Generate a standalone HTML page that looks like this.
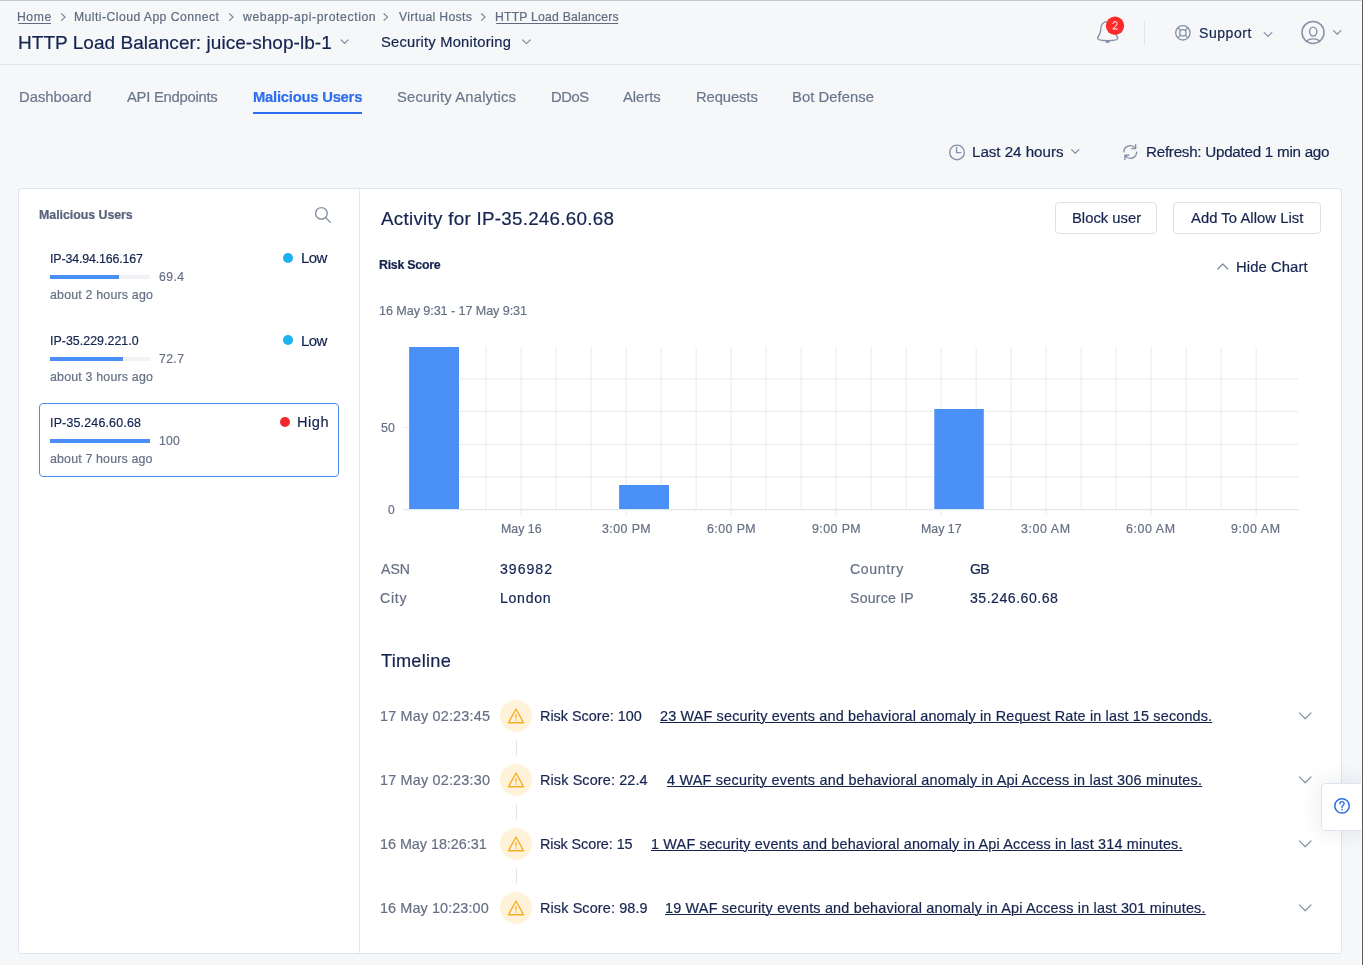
<!DOCTYPE html>
<html><head><meta charset="utf-8">
<style>
html,body{margin:0;padding:0;}
body{-webkit-font-smoothing:antialiased;width:1363px;height:965px;overflow:hidden;background:#f5f7f9;position:relative;font-family:"Liberation Sans",sans-serif;}
.t{will-change:transform;-webkit-text-stroke:0.2px currentColor;position:absolute;white-space:nowrap;line-height:1;font-family:"Liberation Sans",sans-serif;}
.a{position:absolute;}
svg.a{overflow:visible;}
</style></head><body>
<!-- top edge -->
<div class="a" style="left:0;top:0;width:1363px;height:1px;background:#c6c7c9"></div>
<!-- right dark edge -->
<div class="a" style="left:1362px;top:0;width:1px;height:965px;background:#6e6e6e"></div>
<!-- header bottom border -->
<div class="a" style="left:0;top:64px;width:1361px;height:1px;background:#dde2ea"></div>
<!-- active tab underline -->
<div class="a" style="left:253px;top:112px;width:109px;height:2px;background:#2d6df2"></div>
<!-- card -->
<div class="a" style="left:18px;top:188px;width:1322px;height:764px;background:#fff;border:1px solid #dfe4ee;border-radius:4px"></div>
<div class="a" style="left:359px;top:189px;width:1px;height:764px;background:#e3e7ef"></div>
<!-- selected item -->
<div class="a" style="left:39px;top:403px;width:298px;height:72px;border:1px solid #4f8bf0;border-radius:4px"></div>
<!-- progress bars -->
<div class="a" style="left:50px;top:275px;width:100px;height:4px;background:#f1f3f6"></div>
<div class="a" style="left:50px;top:275px;width:69px;height:4px;background:#4a8ff5"></div>
<div class="a" style="left:50px;top:357px;width:100px;height:4px;background:#f1f3f6"></div>
<div class="a" style="left:50px;top:357px;width:73px;height:4px;background:#4a8ff5"></div>
<div class="a" style="left:50px;top:439px;width:100px;height:4px;background:#4a8ff5"></div>
<!-- dots -->
<div class="a" style="left:283px;top:253px;width:10px;height:10px;border-radius:50%;background:#1eb1f0"></div>
<div class="a" style="left:283px;top:335px;width:10px;height:10px;border-radius:50%;background:#1eb1f0"></div>
<div class="a" style="left:280px;top:417px;width:10px;height:10px;border-radius:50%;background:#f0282d"></div>
<!-- buttons -->
<div class="a" style="left:1055px;top:202px;width:100px;height:30px;border:1px solid #dce1eb;border-radius:4px;background:#fff"></div>
<div class="a" style="left:1173px;top:202px;width:146px;height:30px;border:1px solid #dce1eb;border-radius:4px;background:#fff"></div>
<!-- help widget -->
<div class="a" style="left:1321px;top:783px;width:46px;height:46px;border:1px solid #dde3ef;border-radius:4px;background:#fff;box-shadow:0 0 24px rgba(30,40,70,0.10)"></div>
<svg class="a" style="left:0;top:0" width="1363" height="965" viewBox="0 0 1363 965"><path d="M61.5 13.8 L65.1 17.1 L61.5 20.4" fill="none" stroke="#7b8699" stroke-width="1.2" stroke-linecap="round" stroke-linejoin="round"/>
<path d="M229.5 13.8 L233.1 17.1 L229.5 20.4" fill="none" stroke="#7b8699" stroke-width="1.2" stroke-linecap="round" stroke-linejoin="round"/>
<path d="M384.0 13.8 L387.6 17.1 L384.0 20.4" fill="none" stroke="#7b8699" stroke-width="1.2" stroke-linecap="round" stroke-linejoin="round"/>
<path d="M481.5 13.8 L485.1 17.1 L481.5 20.4" fill="none" stroke="#7b8699" stroke-width="1.2" stroke-linecap="round" stroke-linejoin="round"/>
<path d="M341.2 40 L344.6 43.4 L348 40" fill="none" stroke="#8592a6" stroke-width="1.3" stroke-linecap="round" stroke-linejoin="round"/>
<path d="M522.6 40 L526.4 43.6 L530.2 40" fill="none" stroke="#8592a6" stroke-width="1.3" stroke-linecap="round" stroke-linejoin="round"/>
<path d="M1107.6 21.6 C1102.6 21.6 1100.6 25.6 1100.6 30.6 C1100.6 35.2 1097.6 35.8 1097.6 38.2 C1097.6 40.2 1102.6 40.6 1107.6 40.6 C1112.6 40.6 1117.8 40.2 1117.8 38.2 C1117.8 35.8 1114.6 35.2 1114.6 30.6 C1114.6 25.6 1112.6 21.6 1107.6 21.6 Z" fill="none" stroke="#8592a6" stroke-width="1.4"/>
<path d="M1105.4 40.9 A2.2 2.2 0 0 0 1109.8 40.9 Z" fill="#8592a6"/>
<circle cx="1115" cy="25.8" r="9.2" fill="#ff2b2b"/>
<path d="M1112.9 23.6 Q1113.2 21.6 1115.1 21.6 Q1117.1 21.6 1117.1 23.5 Q1117.1 24.8 1115.6 26.2 L1112.8 29 L1117.3 29" fill="none" stroke="#fff" stroke-width="1" stroke-linecap="round" stroke-linejoin="round"/>
<rect x="1144" y="21" width="1" height="24" fill="#dfe3ea"/>
<circle cx="1182.9" cy="32.8" r="7.2" fill="none" stroke="#8592a6" stroke-width="1.3"/>
<circle cx="1182.9" cy="32.8" r="3.2" fill="none" stroke="#8592a6" stroke-width="1.3"/>
<line x1="1185.16" y1="35.06" x2="1187.99" y2="37.89" stroke="#8592a6" stroke-width="1.3"/>
<line x1="1180.64" y1="35.06" x2="1177.81" y2="37.89" stroke="#8592a6" stroke-width="1.3"/>
<line x1="1180.64" y1="30.54" x2="1177.81" y2="27.71" stroke="#8592a6" stroke-width="1.3"/>
<line x1="1185.16" y1="30.54" x2="1187.99" y2="27.71" stroke="#8592a6" stroke-width="1.3"/>
<path d="M1264.2 32.6 L1268 36.4 L1271.8 32.6" fill="none" stroke="#8592a6" stroke-width="1.3" stroke-linecap="round" stroke-linejoin="round"/>
<circle cx="1313" cy="32.4" r="11" fill="none" stroke="#8592a6" stroke-width="1.5"/>
<ellipse cx="1313.2" cy="31.6" rx="3.6" ry="4.5" fill="none" stroke="#8592a6" stroke-width="1.4"/>
<path d="M1306 41.2 Q1313.2 36.6 1320.4 41.2" fill="none" stroke="#8592a6" stroke-width="1.4"/>
<path d="M1333.6 30.6 L1337.2 34.2 L1340.8 30.6" fill="none" stroke="#8592a6" stroke-width="1.3" stroke-linecap="round" stroke-linejoin="round"/>
<circle cx="957" cy="152.4" r="7.3" fill="none" stroke="#8592a6" stroke-width="1.4"/>
<path d="M956.6 147.4 V152.6 H960.8" fill="none" stroke="#8592a6" stroke-width="1.4" stroke-linecap="round" stroke-linejoin="round"/>
<path d="M1071.6 149.6 L1075.2 153.2 L1078.8 149.6" fill="none" stroke="#8592a6" stroke-width="1.3" stroke-linecap="round" stroke-linejoin="round"/>
<path d="M1123.9 151.7 A6.3 6.3 0 0 1 1135.2 148.2 M1135.6 144.4 V148.6 H1131.6 M1136.7 152.3 A6.3 6.3 0 0 1 1125.4 155.8 M1124.9 159.6 V155.3 H1128.9" fill="none" stroke="#8592a6" stroke-width="1.4" stroke-linecap="round" stroke-linejoin="round"/>
<circle cx="321.4" cy="213.4" r="5.8" fill="none" stroke="#8592a6" stroke-width="1.4"/>
<path d="M325.6 217.6 L330.2 222.2" fill="none" stroke="#8592a6" stroke-width="1.4" stroke-linecap="round"/>
<path d="M1217.8 269 L1222.8 264 L1227.8 269" fill="none" stroke="#8592a6" stroke-width="1.4" stroke-linecap="round" stroke-linejoin="round"/>
<rect x="415.6" y="347" width="1" height="162.5" fill="#e8eaf0"/>
<rect x="450.6" y="347" width="1" height="162.5" fill="#e8eaf0"/>
<rect x="485.6" y="347" width="1" height="162.5" fill="#e8eaf0"/>
<rect x="520.6" y="347" width="1" height="162.5" fill="#e8eaf0"/>
<rect x="555.6" y="347" width="1" height="162.5" fill="#e8eaf0"/>
<rect x="590.6" y="347" width="1" height="162.5" fill="#e8eaf0"/>
<rect x="625.6" y="347" width="1" height="162.5" fill="#e8eaf0"/>
<rect x="660.6" y="347" width="1" height="162.5" fill="#e8eaf0"/>
<rect x="695.6" y="347" width="1" height="162.5" fill="#e8eaf0"/>
<rect x="730.6" y="347" width="1" height="162.5" fill="#e8eaf0"/>
<rect x="765.6" y="347" width="1" height="162.5" fill="#e8eaf0"/>
<rect x="800.6" y="347" width="1" height="162.5" fill="#e8eaf0"/>
<rect x="835.6" y="347" width="1" height="162.5" fill="#e8eaf0"/>
<rect x="870.6" y="347" width="1" height="162.5" fill="#e8eaf0"/>
<rect x="905.6" y="347" width="1" height="162.5" fill="#e8eaf0"/>
<rect x="940.6" y="347" width="1" height="162.5" fill="#e8eaf0"/>
<rect x="975.6" y="347" width="1" height="162.5" fill="#e8eaf0"/>
<rect x="1010.6" y="347" width="1" height="162.5" fill="#e8eaf0"/>
<rect x="1045.6" y="347" width="1" height="162.5" fill="#e8eaf0"/>
<rect x="1080.6" y="347" width="1" height="162.5" fill="#e8eaf0"/>
<rect x="1115.6" y="347" width="1" height="162.5" fill="#e8eaf0"/>
<rect x="1150.6" y="347" width="1" height="162.5" fill="#e8eaf0"/>
<rect x="1185.6" y="347" width="1" height="162.5" fill="#e8eaf0"/>
<rect x="1220.6" y="347" width="1" height="162.5" fill="#e8eaf0"/>
<rect x="1255.6" y="347" width="1" height="162.5" fill="#e8eaf0"/>
<rect x="409" y="378.4" width="889.5" height="1" fill="#e8eaf0"/>
<rect x="409" y="410.8" width="889.5" height="1" fill="#e8eaf0"/>
<rect x="409" y="443.9" width="889.5" height="1" fill="#e8eaf0"/>
<rect x="409" y="476.4" width="889.5" height="1" fill="#e8eaf0"/>
<rect x="403" y="508.9" width="895.5" height="1.4" fill="#e3e6ed"/>
<rect x="403" y="427" width="6" height="1" fill="#e8eaf0"/>
<rect x="520.6" y="510" width="1" height="5.5" fill="#e8eaf0"/>
<rect x="625.6" y="510" width="1" height="5.5" fill="#e8eaf0"/>
<rect x="730.6" y="510" width="1" height="5.5" fill="#e8eaf0"/>
<rect x="835.6" y="510" width="1" height="5.5" fill="#e8eaf0"/>
<rect x="940.6" y="510" width="1" height="5.5" fill="#e8eaf0"/>
<rect x="1045.6" y="510" width="1" height="5.5" fill="#e8eaf0"/>
<rect x="1150.6" y="510" width="1" height="5.5" fill="#e8eaf0"/>
<rect x="1255.6" y="510" width="1" height="5.5" fill="#e8eaf0"/>
<rect x="409.1" y="347" width="49.9" height="162" fill="#4b90f6"/>
<rect x="619.1" y="485" width="49.9" height="24" fill="#4b90f6"/>
<rect x="934.3" y="409" width="49.5" height="100" fill="#4b90f6"/>
<circle cx="516" cy="715.9" r="16" fill="#fef2d8"/>
<path d="M516 709.0 L523.6 722.8 L508.4 722.8 Z" fill="none" stroke="#fbad26" stroke-width="1.4" stroke-linejoin="round"/>
<rect x="515.35" y="714.3" width="1.3" height="3.9" fill="#fbad26"/>
<rect x="515.35" y="719.4" width="1.3" height="1.3" fill="#fbad26"/>
<rect x="516" y="739.9" width="1" height="15.5" fill="#e1e5ee"/>
<path d="M1299.4 712.9 L1305.2 718.6999999999999 L1311 712.9" fill="none" stroke="#8592a6" stroke-width="1.3" stroke-linecap="round" stroke-linejoin="round"/>
<circle cx="516" cy="779.9" r="16" fill="#fef2d8"/>
<path d="M516 773.0 L523.6 786.8 L508.4 786.8 Z" fill="none" stroke="#fbad26" stroke-width="1.4" stroke-linejoin="round"/>
<rect x="515.35" y="778.3" width="1.3" height="3.9" fill="#fbad26"/>
<rect x="515.35" y="783.4" width="1.3" height="1.3" fill="#fbad26"/>
<rect x="516" y="803.9" width="1" height="15.5" fill="#e1e5ee"/>
<path d="M1299.4 776.9 L1305.2 782.6999999999999 L1311 776.9" fill="none" stroke="#8592a6" stroke-width="1.3" stroke-linecap="round" stroke-linejoin="round"/>
<circle cx="516" cy="843.9" r="16" fill="#fef2d8"/>
<path d="M516 837.0 L523.6 850.8 L508.4 850.8 Z" fill="none" stroke="#fbad26" stroke-width="1.4" stroke-linejoin="round"/>
<rect x="515.35" y="842.3" width="1.3" height="3.9" fill="#fbad26"/>
<rect x="515.35" y="847.4" width="1.3" height="1.3" fill="#fbad26"/>
<rect x="516" y="867.9" width="1" height="15.5" fill="#e1e5ee"/>
<path d="M1299.4 840.9 L1305.2 846.6999999999999 L1311 840.9" fill="none" stroke="#8592a6" stroke-width="1.3" stroke-linecap="round" stroke-linejoin="round"/>
<circle cx="516" cy="907.9" r="16" fill="#fef2d8"/>
<path d="M516 901.0 L523.6 914.8 L508.4 914.8 Z" fill="none" stroke="#fbad26" stroke-width="1.4" stroke-linejoin="round"/>
<rect x="515.35" y="906.3" width="1.3" height="3.9" fill="#fbad26"/>
<rect x="515.35" y="911.4" width="1.3" height="1.3" fill="#fbad26"/>
<path d="M1299.4 904.9 L1305.2 910.6999999999999 L1311 904.9" fill="none" stroke="#8592a6" stroke-width="1.3" stroke-linecap="round" stroke-linejoin="round"/>
<circle cx="1342" cy="805.9" r="7.2" fill="none" stroke="#2f6fe4" stroke-width="1.5"/>
<path d="M1339.9 803.9 Q1339.9 801.6 1342 801.6 Q1344.1 801.6 1344.1 803.6 Q1344.1 805 1342.8 805.7 Q1342 806.2 1342 807.6" fill="none" stroke="#2f6fe4" stroke-width="1.4" stroke-linecap="round"/>
<circle cx="1342" cy="809.6" r="0.85" fill="#2f6fe4"/>
<rect x="18.3" y="23" width="32.7" height="1" fill="#5f6b80"/>
<rect x="496.2" y="23" width="122" height="1" fill="#5f6b80"/></svg>
<span class='t' style='left:17.30px;top:11.00px;font-size:12.2px;letter-spacing:0.567px;color:#5f6b80;font-weight:400;'>Home</span>
<span class='t' style='left:74.20px;top:11.00px;font-size:12.2px;letter-spacing:0.455px;color:#5f6b80;font-weight:400;'>Multi-Cloud App Connect</span>
<span class='t' style='left:243.20px;top:11.00px;font-size:12.2px;letter-spacing:0.600px;color:#5f6b80;font-weight:400;'>webapp-api-protection</span>
<span class='t' style='left:399.20px;top:11.00px;font-size:12.2px;letter-spacing:0.333px;color:#5f6b80;font-weight:400;'>Virtual Hosts</span>
<span class='t' style='left:495.20px;top:11.00px;font-size:12.2px;letter-spacing:0.222px;color:#5f6b80;font-weight:400;'>HTTP Load Balancers</span>
<span class='t' style='left:18.00px;top:33.00px;font-size:19px;letter-spacing:0.044px;color:#14244f;font-weight:400;'>HTTP Load Balancer: juice-shop-lb-1</span>
<span class='t' style='left:380.60px;top:35.00px;font-size:14.7px;letter-spacing:0.233px;color:#14244f;font-weight:400;'>Security Monitoring</span>
<span class='t' style='left:1199.10px;top:26.00px;font-size:14px;letter-spacing:0.567px;color:#14244f;font-weight:400;'>Support</span>
<span class='t' style='left:18.80px;top:90.00px;font-size:14.8px;letter-spacing:0.012px;color:#6b778c;font-weight:400;'>Dashboard</span>
<span class='t' style='left:127.30px;top:90.00px;font-size:14.8px;letter-spacing:-0.258px;color:#6b778c;font-weight:400;'>API Endpoints</span>
<span class='t' style='left:252.50px;top:90.00px;font-size:14.8px;letter-spacing:-0.236px;color:#2e6ef0;font-weight:700;'>Malicious Users</span>
<span class='t' style='left:396.50px;top:90.00px;font-size:14.8px;letter-spacing:0.171px;color:#6b778c;font-weight:400;'>Security Analytics</span>
<span class='t' style='left:551.00px;top:90.00px;font-size:14.8px;letter-spacing:-0.433px;color:#6b778c;font-weight:400;'>DDoS</span>
<span class='t' style='left:623.40px;top:90.00px;font-size:14.8px;letter-spacing:-0.040px;color:#6b778c;font-weight:400;'>Alerts</span>
<span class='t' style='left:696.40px;top:90.00px;font-size:14.8px;letter-spacing:-0.100px;color:#6b778c;font-weight:400;'>Requests</span>
<span class='t' style='left:792.20px;top:90.00px;font-size:14.8px;letter-spacing:0.050px;color:#6b778c;font-weight:400;'>Bot Defense</span>
<span class='t' style='left:971.70px;top:144.00px;font-size:15.2px;letter-spacing:-0.042px;color:#14244f;font-weight:400;'>Last 24 hours</span>
<span class='t' style='left:1145.50px;top:144.00px;font-size:15.2px;letter-spacing:-0.260px;color:#14244f;font-weight:400;'>Refresh: Updated 1 min ago</span>
<span class='t' style='left:38.60px;top:209.00px;font-size:12.4px;letter-spacing:-0.043px;color:#56637a;font-weight:700;'>Malicious Users</span>
<span class='t' style='left:49.90px;top:253.00px;font-size:12.4px;letter-spacing:-0.147px;color:#14244f;font-weight:400;'>IP-34.94.166.167</span>
<span class='t' style='left:159.40px;top:271.00px;font-size:12.2px;letter-spacing:0.467px;color:#667085;font-weight:400;'>69.4</span>
<span class='t' style='left:50.30px;top:289.00px;font-size:12.4px;letter-spacing:0.188px;color:#667085;font-weight:400;'>about 2 hours ago</span>
<span class='t' style='left:49.90px;top:335.00px;font-size:12.4px;letter-spacing:0.029px;color:#14244f;font-weight:400;'>IP-35.229.221.0</span>
<span class='t' style='left:159.40px;top:353.00px;font-size:12.2px;letter-spacing:0.400px;color:#667085;font-weight:400;'>72.7</span>
<span class='t' style='left:50.30px;top:371.00px;font-size:12.4px;letter-spacing:0.188px;color:#667085;font-weight:400;'>about 3 hours ago</span>
<span class='t' style='left:49.90px;top:417.00px;font-size:12.4px;letter-spacing:0.193px;color:#14244f;font-weight:400;'>IP-35.246.60.68</span>
<span class='t' style='left:159.40px;top:435.00px;font-size:12.2px;letter-spacing:0.250px;color:#667085;font-weight:400;'>100</span>
<span class='t' style='left:50.30px;top:453.00px;font-size:12.4px;letter-spacing:0.156px;color:#667085;font-weight:400;'>about 7 hours ago</span>
<span class='t' style='left:300.70px;top:250.00px;font-size:15px;letter-spacing:-0.550px;color:#14244f;font-weight:400;'>Low</span>
<span class='t' style='left:300.70px;top:333.00px;font-size:15px;letter-spacing:-0.550px;color:#14244f;font-weight:400;'>Low</span>
<span class='t' style='left:296.80px;top:415.00px;font-size:14.6px;letter-spacing:0.533px;color:#14244f;font-weight:400;'>High</span>
<span class='t' style='left:380.90px;top:210.00px;font-size:18.8px;letter-spacing:0.274px;color:#14244f;font-weight:400;'>Activity for IP-35.246.60.68</span>
<span class='t' style='left:1071.70px;top:211.00px;font-size:14.8px;letter-spacing:0.000px;color:#14244f;font-weight:400;'>Block user</span>
<span class='t' style='left:1190.70px;top:211.00px;font-size:14.8px;letter-spacing:0.050px;color:#14244f;font-weight:400;'>Add To Allow List</span>
<span class='t' style='left:379.30px;top:259.00px;font-size:12.4px;letter-spacing:-0.267px;color:#14244f;font-weight:700;'>Risk Score</span>
<span class='t' style='left:1236.40px;top:260.00px;font-size:14.8px;letter-spacing:0.089px;color:#14244f;font-weight:400;'>Hide Chart</span>
<span class='t' style='left:379.30px;top:305.00px;font-size:12.6px;letter-spacing:-0.075px;color:#667085;font-weight:400;'>16 May 9:31 - 17 May 9:31</span>
<span class='t' style='left:380.50px;top:422.00px;font-size:12.4px;letter-spacing:0.000px;color:#667085;font-weight:400;'>50</span>
<span class='t' style='left:388.00px;top:504.00px;font-size:12px;letter-spacing:0.000px;color:#667085;font-weight:400;'>0</span>
<span class='t' style='left:500.65px;top:523.00px;font-size:12.4px;letter-spacing:-0.020px;color:#667085;font-weight:400;'>May 16</span>
<span class='t' style='left:601.95px;top:523.00px;font-size:12.4px;letter-spacing:0.417px;color:#667085;font-weight:400;'>3:00 PM</span>
<span class='t' style='left:706.95px;top:523.00px;font-size:12.4px;letter-spacing:0.417px;color:#667085;font-weight:400;'>6:00 PM</span>
<span class='t' style='left:811.95px;top:523.00px;font-size:12.4px;letter-spacing:0.417px;color:#667085;font-weight:400;'>9:00 PM</span>
<span class='t' style='left:920.75px;top:523.00px;font-size:12.4px;letter-spacing:-0.020px;color:#667085;font-weight:400;'>May 17</span>
<span class='t' style='left:1021.45px;top:523.00px;font-size:12.4px;letter-spacing:0.583px;color:#667085;font-weight:400;'>3:00 AM</span>
<span class='t' style='left:1126.45px;top:523.00px;font-size:12.4px;letter-spacing:0.583px;color:#667085;font-weight:400;'>6:00 AM</span>
<span class='t' style='left:1231.45px;top:523.00px;font-size:12.4px;letter-spacing:0.583px;color:#667085;font-weight:400;'>9:00 AM</span>
<span class='t' style='left:380.50px;top:562.00px;font-size:14.1px;letter-spacing:0.000px;color:#667085;font-weight:400;'>ASN</span>
<span class='t' style='left:499.60px;top:562.00px;font-size:14.1px;letter-spacing:1.000px;color:#14244f;font-weight:400;'>396982</span>
<span class='t' style='left:379.50px;top:591.00px;font-size:14.1px;letter-spacing:0.767px;color:#667085;font-weight:400;'>City</span>
<span class='t' style='left:499.60px;top:591.00px;font-size:14.1px;letter-spacing:0.720px;color:#14244f;font-weight:400;'>London</span>
<span class='t' style='left:850.00px;top:562.00px;font-size:14.1px;letter-spacing:0.650px;color:#667085;font-weight:400;'>Country</span>
<span class='t' style='left:970.10px;top:562.00px;font-size:14.1px;letter-spacing:-0.600px;color:#14244f;font-weight:400;'>GB</span>
<span class='t' style='left:850.00px;top:591.00px;font-size:14.1px;letter-spacing:0.225px;color:#667085;font-weight:400;'>Source IP</span>
<span class='t' style='left:970.10px;top:591.00px;font-size:14.1px;letter-spacing:0.509px;color:#14244f;font-weight:400;'>35.246.60.68</span>
<span class='t' style='left:381.00px;top:652.00px;font-size:18.2px;letter-spacing:0.243px;color:#14244f;font-weight:400;'>Timeline</span>
<span class='t' style='left:379.60px;top:709.00px;font-size:14.4px;letter-spacing:0.193px;color:#667085;font-weight:400;'>17 May 02:23:45</span>
<span class='t' style='left:539.60px;top:709.00px;font-size:14.4px;letter-spacing:0.007px;color:#14244f;font-weight:400;'>Risk Score: 100</span>
<span class='t' style='left:660.40px;top:709.00px;font-size:14.4px;letter-spacing:0.169px;color:#14244f;font-weight:400;text-decoration:underline;text-underline-offset:1px;text-decoration-thickness:1px;'>23 WAF security events and behavioral anomaly in Request Rate in last 15 seconds.</span>
<span class='t' style='left:379.60px;top:773.00px;font-size:14.4px;letter-spacing:0.193px;color:#667085;font-weight:400;'>17 May 02:23:30</span>
<span class='t' style='left:539.60px;top:773.00px;font-size:14.4px;letter-spacing:0.133px;color:#14244f;font-weight:400;'>Risk Score: 22.4</span>
<span class='t' style='left:667.40px;top:773.00px;font-size:14.4px;letter-spacing:0.231px;color:#14244f;font-weight:400;text-decoration:underline;text-underline-offset:1px;text-decoration-thickness:1px;'>4 WAF security events and behavioral anomaly in Api Access in last 306 minutes.</span>
<span class='t' style='left:379.60px;top:837.00px;font-size:14.4px;letter-spacing:-0.036px;color:#667085;font-weight:400;'>16 May 18:26:31</span>
<span class='t' style='left:539.60px;top:837.00px;font-size:14.4px;letter-spacing:-0.077px;color:#14244f;font-weight:400;'>Risk Score: 15</span>
<span class='t' style='left:651.40px;top:837.00px;font-size:14.4px;letter-spacing:0.186px;color:#14244f;font-weight:400;text-decoration:underline;text-underline-offset:1px;text-decoration-thickness:1px;'>1 WAF security events and behavioral anomaly in Api Access in last 314 minutes.</span>
<span class='t' style='left:379.60px;top:901.00px;font-size:14.4px;letter-spacing:0.107px;color:#667085;font-weight:400;'>16 May 10:23:00</span>
<span class='t' style='left:539.60px;top:901.00px;font-size:14.4px;letter-spacing:0.133px;color:#14244f;font-weight:400;'>Risk Score: 98.9</span>
<span class='t' style='left:665.40px;top:901.00px;font-size:14.4px;letter-spacing:0.196px;color:#14244f;font-weight:400;text-decoration:underline;text-underline-offset:1px;text-decoration-thickness:1px;'>19 WAF security events and behavioral anomaly in Api Access in last 301 minutes.</span>
<div class="a" style="left:1361px;top:0;width:1px;height:965px;background:#f9fafb"></div>
<div class="a" style="left:1362px;top:0;width:1px;height:965px;background:#5a5a5a"></div>
</body></html>
